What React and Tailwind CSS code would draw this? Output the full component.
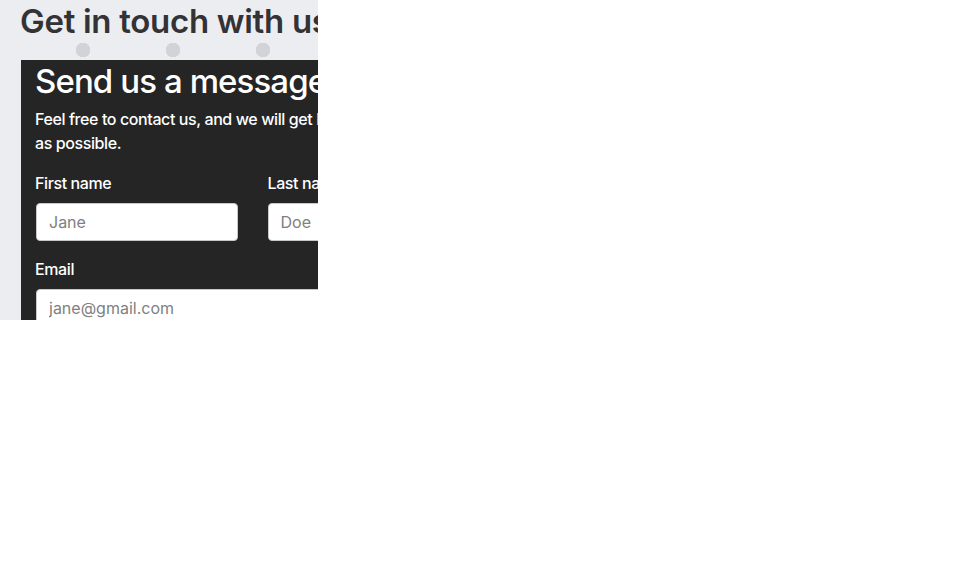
import React from 'react';

function App() {
  return (
    <div className="min-h-screen bg-white">
      <div className="w-[318px] h-[320px] overflow-hidden bg-[#ecedf1] bg-[radial-gradient(circle,#d2d3d7_7px,transparent_7.5px)] bg-[length:90px_90px] bg-[position:-52px_5px]">
        <div className="w-[520px] pl-[21px]" style={{ fontFamily: 'Inter, "Noto Sans", sans-serif' }}>
          <h1 className="-ml-px text-[33px] leading-[42px] font-semibold tracking-[-0.3px] text-[#333336]">Get in touch with us</h1>
          <div className="mt-[18px] w-[462px] bg-[#252525] px-[14px] pb-6 text-white">
            <h2 className="text-[33px] leading-[42px] font-medium tracking-[-0.9px]">Send us a message</h2>
            <p className="mt-[5px] text-[16px] leading-6 font-medium tracking-[-0.4px]">
              Feel free to contact us, and we will get back to you as soon as possible.
            </p>
            <div className="mt-4 grid grid-cols-2 gap-x-[30px] pl-px">
              <div>
                <label className="-ml-px block text-[16px] leading-6 font-medium tracking-[-0.4px]">First name</label>
                <input className="mt-2 w-full h-[38px] rounded bg-white border border-[#c8c8c8] px-3 text-[16px] text-[#333] placeholder:text-[#808080]" placeholder="Jane" />
              </div>
              <div>
                <label className="block text-[16px] leading-6 font-medium tracking-[-0.4px]">Last name</label>
                <input className="mt-2 w-full h-[38px] rounded bg-white border border-[#c8c8c8] px-3 text-[16px] text-[#333] placeholder:text-[#808080]" placeholder="Doe" />
              </div>
            </div>
            <div className="mt-4 pl-px">
              <label className="-ml-px block text-[16px] leading-6 font-medium tracking-[-0.4px]">Email</label>
              <input className="mt-2 w-full h-[38px] rounded bg-white border border-[#c8c8c8] px-3 text-[16px] text-[#333] placeholder:text-[#808080]" placeholder="jane@gmail.com" />
            </div>
          </div>
        </div>
      </div>
    </div>
  );
}

export default App;
